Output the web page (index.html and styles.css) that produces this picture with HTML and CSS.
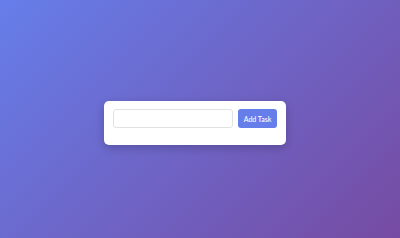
FILE: index.html
```html
<!DOCTYPE html>
<html>
<head>
<meta charset="utf-8">
<link rel="stylesheet" href="styles.css">
</head>
<body>
<div class="card">
  <form class="task-form">
    <input class="task-input" type="text">
    <button class="add-btn" type="button">Add Task</button>
  </form>
  <ul class="task-list"></ul>
</div>
</body>
</html>
```
FILE: styles.css
```css
html, body {
  margin: 0;
  height: 100%;
}
body {
  background: linear-gradient(135deg, #667eea 0%, #764ba2 100%);
  font-family: Lato, "Liberation Sans", sans-serif;
  padding: 101px 0 0 104px;
  box-sizing: border-box;
}
.card {
  width: 182px;
  height: 44px;
  box-sizing: border-box;
  background: #fff;
  border-radius: 5px;
  padding: 8px 9px 0 9px;
  box-shadow: 0 3px 10px rgba(0, 0, 0, 0.2);
}
.task-form {
  display: flex;
  gap: 5px;
  margin: 0;
}
.task-input {
  width: 120px;
  height: 19px;
  box-sizing: border-box;
  border: 1px solid #e2e2e2;
  border-radius: 3px;
  padding: 0 4px;
  margin: 0;
  outline: none;
}
.add-btn {
  width: 39px;
  height: 19px;
  box-sizing: border-box;
  border: none;
  border-radius: 3px;
  background: #667eea;
  color: #fff;
  font-family: Lato, "Liberation Sans", sans-serif;
  font-size: 7px;
  font-weight: 500;
  padding: 0;
  margin: 0;
}
.task-list {
  margin: 0;
  padding: 0;
  list-style: none;
}
```
